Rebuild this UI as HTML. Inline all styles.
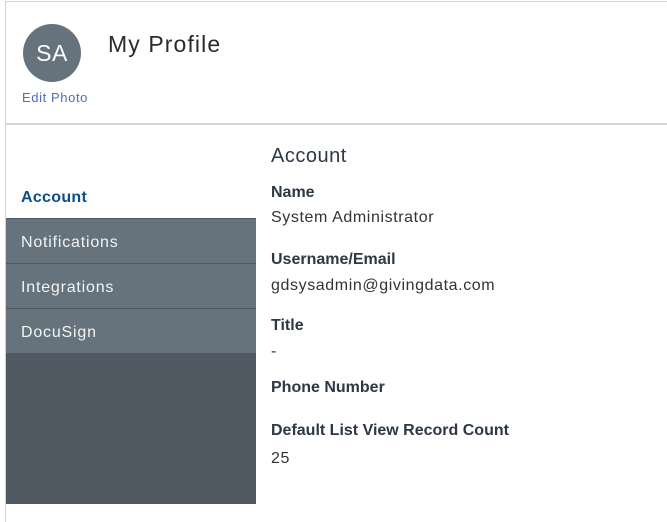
<!DOCTYPE html>
<html><head><style>
body{margin:0;width:667px;height:504px;overflow:hidden;background:#fff;font-family:"Liberation Sans",sans-serif;position:relative}
.frame{position:absolute;left:5px;top:1px;width:700px;height:520px;border-left:1px solid #cfd2d4;border-top:1px solid #cfd2d4}
.hdr{position:absolute;left:6px;top:2px;width:661px;height:121px;border-bottom:2px solid #d3d5d7}
.av{position:absolute;left:23px;top:24px;width:58px;height:58px;border-radius:50%;background:#66737c;color:#fff;font-size:23px;letter-spacing:.5px;text-align:center;line-height:58px}
.ep{position:absolute;left:22px;top:90px;font-size:13px;letter-spacing:.6px;color:#4a72ad}
h1{position:absolute;left:108px;top:31px;margin:0;font-weight:normal;font-size:23px;letter-spacing:1.1px;color:#2b2b2b}
.side{position:absolute;left:6px;top:174px;width:250px;height:330px;background:#515a63}
.it{height:44px;border-bottom:1px solid #4f5962;background:#66737c;color:#f2f4f5;font-size:16px;letter-spacing:.8px;line-height:48px;padding-left:15px;box-sizing:content-box}
.it.a{background:#fff;color:#0d4d87;font-weight:bold;letter-spacing:.3px;border-bottom:1px solid #4f5962}
.c{position:absolute;left:271px;color:#2d3745}
.l{font-weight:bold;font-size:16px}
.v{font-size:16px;letter-spacing:.6px;color:#333}
</style></head><body>
<div class="frame"></div>
<div class="hdr"></div>
<div class="av">SA</div>
<div class="ep">Edit Photo</div>
<h1>My Profile</h1>
<div class="side">
<div class="it a">Account</div>
<div class="it">Notifications</div>
<div class="it">Integrations</div>
<div class="it">DocuSign</div>
</div>
<div class="c" style="top:145px;font-size:20px;letter-spacing:.5px">Account</div>
<div class="c l" style="top:184px">Name</div>
<div class="c v" style="top:209px">System Administrator</div>
<div class="c l" style="top:251px">Username/Email</div>
<div class="c v" style="top:277px">gdsysadmin@givingdata.com</div>
<div class="c l" style="top:317px">Title</div>
<div class="c v" style="top:343px">-</div>
<div class="c l" style="top:379px">Phone Number</div>
<div class="c l" style="top:422px">Default List View Record Count</div>
<div class="c v" style="top:450px">25</div>
</body></html>
